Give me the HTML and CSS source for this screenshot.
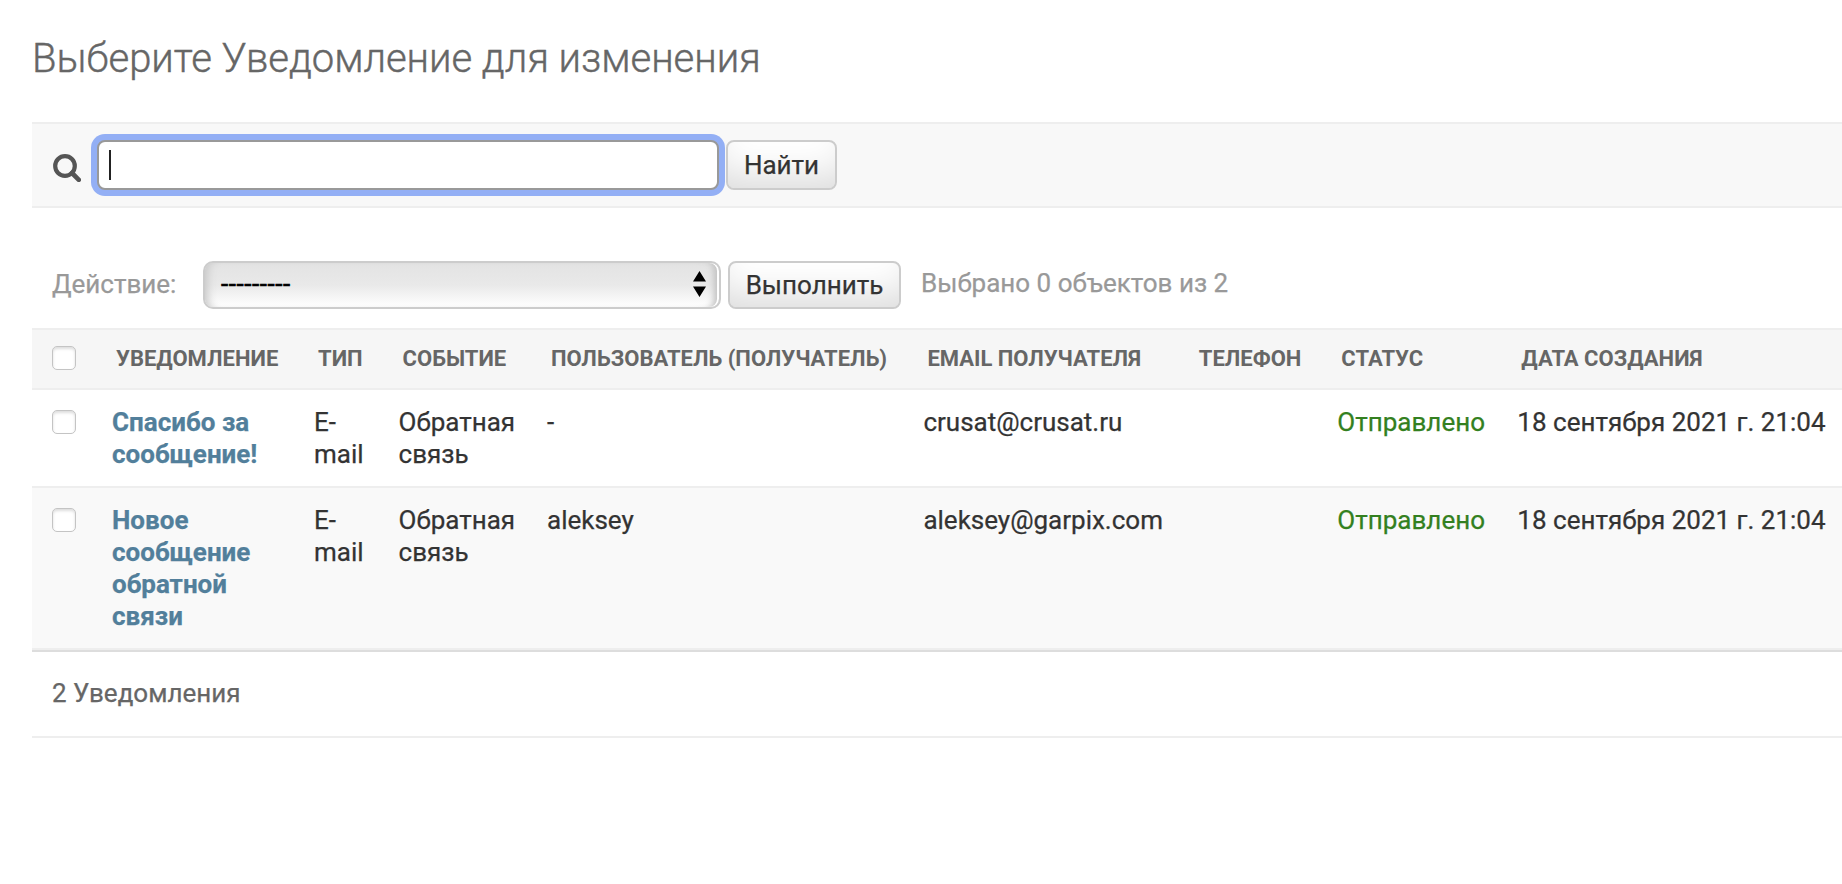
FILE: index.html
```html
<!DOCTYPE html>
<html lang="ru">
<head>
<meta charset="utf-8">
<title>Выберите Уведомление для изменения</title>
<link rel="stylesheet" href="styles.css">
</head>
<body>
<main class="content">
  <h1 class="title">Выберите Уведомление для изменения</h1>
  <div class="changelist">
    <form class="toolbar">
      <svg class="search-icon" viewBox="0 0 28 28"><circle cx="12" cy="12" r="9.8" fill="none" stroke="#555" stroke-width="4.2"/><path d="M19 19l6.8 6.8" stroke="#555" stroke-width="4.6" stroke-linecap="round"/></svg>
      <div class="search-input"><span class="caret"></span></div>
      <button type="button" class="button find">Найти</button>
    </form>
    <div class="actions">
      <span class="actions-label">Действие:</span>
      <div class="select"><span class="select-value">---------</span><svg class="arrows" viewBox="0 0 13 26"><path d="M0 10.5L6.5 0 13 10.5zM0 15.5h13L6.5 26z"/></svg></div>
      <button type="button" class="button run">Выполнить</button>
      <span class="counter">Выбрано 0 объектов из 2</span>
    </div>
    <table class="results">
      <colgroup><col class="c-check"><col class="c-name"><col class="c-type"><col class="c-event"><col class="c-user"><col class="c-email"><col class="c-phone"><col class="c-status"><col class="c-date"></colgroup>
      <thead>
        <tr><th class="check-cell"><span class="checkbox"></span></th><th>Уведомление</th><th>Тип</th><th>Событие</th><th>Пользователь (получатель)</th><th>Email получателя</th><th>Телефон</th><th>Статус</th><th>Дата создания</th></tr>
      </thead>
      <tbody>
        <tr><td class="check-cell"><span class="checkbox"></span></td><td class="name">Спасибо за<br>сообщение!</td><td>E-<br>mail</td><td>Обратная<br>связь</td><td>-</td><td>crusat@crusat.ru</td><td></td><td class="sent">Отправлено</td><td>18 сентября 2021 г. 21:04</td></tr>
        <tr><td class="check-cell"><span class="checkbox"></span></td><td class="name">Новое<br>сообщение<br>обратной<br>связи</td><td>E-<br>mail</td><td>Обратная<br>связь</td><td>aleksey</td><td>aleksey@garpix.com</td><td></td><td class="sent">Отправлено</td><td>18 сентября 2021 г. 21:04</td></tr>
      </tbody>
    </table>
    <p class="paginator">2 Уведомления</p>
  </div>
</main>
</body>
</html>
```
FILE: styles.css
```css
* { box-sizing: border-box; }
body {
  margin: 0;
  background: #fff;
  color: #333;
  font: 26px/32px Roboto, "Liberation Sans", sans-serif;
  overflow: hidden;
}
.content { padding: 35px 0 0 32px; }
.title {
  margin: 0 0 39px;
  font-size: 40px;
  line-height: 48px;
  font-weight: 300;
  letter-spacing: -0.04px;
  -webkit-text-stroke: 0.4px #666;
  color: #666;
}
.toolbar {
  display: flex;
  align-items: center;
  height: 86px;
  padding: 0 0 0 21px;
  background: #f8f8f8;
  border-top: 2px solid #eee;
  border-bottom: 2px solid #eee;
}
.search-icon { width: 28px; height: 28px; margin: 6px 16px 0 0; }
.search-input {
  display: flex;
  align-items: center;
  width: 622px;
  height: 50px;
  padding-left: 10px;
  background: #fff;
  border: 2px solid #999;
  border-radius: 8px;
  box-shadow: 0 0 0 6px #93aff5;
}
.caret { width: 2px; height: 30px; background: #222; }
.button {
  padding: 0;
  color: #333;
  font: 26px/32px Roboto, "Liberation Sans", sans-serif;
  -webkit-text-stroke: 0.25px;
  border: 2px solid #ccc;
  border-radius: 8px;
  background: #fff;
  box-shadow: inset 0 -30px 40px -20px #d9d9d9;
}
.find { width: 111px; height: 50px; margin-left: 7px; }
.run { width: 173px; height: 48px; margin-left: 7px; }
.actions {
  display: flex;
  align-items: center;
  height: 120px;
  padding: 34px 0 0 20px;
  color: #999;
  -webkit-text-stroke: 0.25px;
}
.actions-label { width: 151px; margin-top: -2px; }
.select {
  display: flex;
  align-items: center;
  justify-content: space-between;
  width: 518px;
  height: 48px;
  padding: 0 13px 2px 16px;
  color: #000;
  border: 2px solid #ccc;
  border-radius: 10px;
  background: linear-gradient(#e3e3e3, #e9e9e9 50%, #fff);
  box-shadow: inset 9px 0 8px -6px #c8c8c8, inset -2px 0 0 #fff, inset -10px 0 7px -5px #c0c0c0;
}
.select-value { letter-spacing: 0.55px; -webkit-text-stroke: 0.6px #000; }
.arrows { width: 13px; height: 26px; }
.counter { margin: -4px 0 0 20px; }
.results {
  width: 1810px;
  table-layout: fixed;
  border-collapse: separate;
  border-spacing: 0;
}
.c-check { width: 64px; }
.c-name { width: 202px; }
.c-type { width: 84.6px; }
.c-event { width: 148.4px; }
.c-user { width: 376.4px; }
.c-email { width: 271.4px; }
.c-phone { width: 142.6px; }
.c-status { width: 180px; }
.c-date { width: 340.6px; }
th {
  height: 62px;
  padding: 2px 0 2px 20px;
  font-size: 22px;
  line-height: 28px;
  font-weight: 700;
  text-align: left;
  text-transform: uppercase;
  white-space: nowrap;
  color: #666;
  background: #f6f6f6;
  border-top: 2px solid #eee;
  border-bottom: 2px solid #eee;
}
td {
  padding: 16px 0 16px 16px;
  vertical-align: top;
  white-space: nowrap;
  border-bottom: 2px solid #eee;
  -webkit-text-stroke: 0.25px;
}
tbody tr:nth-child(2) { background: #f9f9f9; }
.name { font-weight: 700; color: #527f9b; }
.sent { color: #338020; }
.check-cell { padding-left: 20px; }
th.check-cell { padding-top: 0; }
.checkbox {
  display: block;
  width: 24px;
  height: 24px;
  background: #fff;
  border: 1px solid #c4c4c4;
  border-radius: 5px;
  box-shadow: inset 0 2px 3px #ddd;
}
td .checkbox { margin-top: 4px; }
.paginator {
  margin: 0;
  height: 88px;
  padding: 25px 0 0 20px;
  color: #666;
  -webkit-text-stroke: 0.25px;
  border-top: 2px solid #ddd;
  border-bottom: 2px solid #eee;
}
```
